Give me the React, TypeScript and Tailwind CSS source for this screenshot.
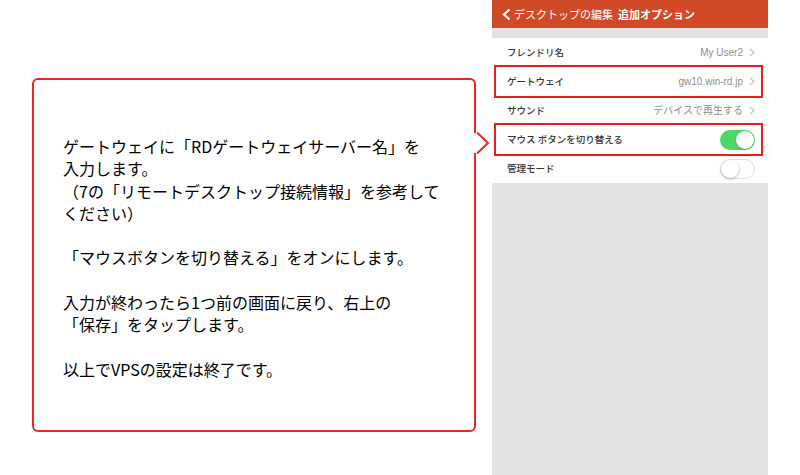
import React from 'react';

const jp = { fontFamily: '"Noto Sans CJK JP", "Noto Sans", sans-serif' };

type Row = {
  label: string;
  value?: string;
  toggle?: boolean;
  on?: boolean;
  boxed?: boolean;
};

const rows: Row[] = [
  { label: 'フレンドリ名', value: 'My User2' },
  { label: 'ゲートウェイ', value: 'gw10.win-rd.jp', boxed: true },
  { label: 'サウンド', value: 'デバイスで再生する' },
  { label: 'マウス ボタンを切り替える', toggle: true, on: true, boxed: true },
  { label: '管理モード', toggle: true, on: false },
];

function Chevron() {
  return (
    <svg width="6" height="9" viewBox="0 0 6 9" className="ml-[6px]">
      <polyline points="1,1 5,4.5 1,8" fill="none" stroke="#c4c4c4" strokeWidth="1.2" />
    </svg>
  );
}

function Toggle({ on }: { on: boolean }) {
  return on ? (
    <div className="w-[35px] h-[20px] rounded-full bg-[#4cd964] flex items-center justify-end pr-[1px]">
      <div className="w-[18px] h-[18px] rounded-full bg-white shadow-[0_1px_2px_rgba(0,0,0,0.25)]" />
    </div>
  ) : (
    <div className="w-[35px] h-[20px] rounded-full bg-white border border-[#e2e2e2] flex items-center">
      <div className="w-[18px] h-[18px] rounded-full bg-white shadow-[0_1px_3px_rgba(0,0,0,0.3)]" />
    </div>
  );
}

function SettingRow({ row }: { row: Row }) {
  return (
    <div className="relative h-[29px] bg-white flex items-center pl-[15px] pr-[13px]">
      <span className="text-[9.5px] font-medium text-[#333]" style={jp}>
        {row.label}
      </span>
      <div className="ml-auto flex items-center">
        {row.toggle ? (
          <Toggle on={!!row.on} />
        ) : (
          <>
            <span
              className="text-[10px] text-[#8e8e8e]"
              style={{ fontFamily: '"Liberation Sans", "Noto Sans CJK JP", sans-serif' }}
            >
              {row.value}
            </span>
            <Chevron />
          </>
        )}
      </div>
      {/* 赤枠 */}
      {row.boxed && (
        <div className="absolute z-10 top-[-2px] bottom-[-2px] left-[2px] right-[5px] border-2 border-[#e8201c]" />
      )}
    </div>
  );
}

export default function App() {
  return (
    <div className="w-[800px] h-[475px] flex bg-white overflow-hidden">
      {/* 説明吹き出し */}
      <div className="pl-[32px] pt-[78px]">
        <div className="relative w-[444px] h-[354px] border-2 border-[#e8262a] rounded-[6px] bg-white pl-[29px] pt-[55px]">
          <p className="text-[16px] leading-[22.3px] text-black whitespace-nowrap" style={jp}>
            ゲートウェイに「RDゲートウェイサーバー名」を
            <br />
            入力します。
            <br />
            （7の「リモートデスクトップ接続情報」を参考して
            <br />
            ください）
            <br />
            <br />
            「マウスボタンを切り替える」をオンにします。
            <br />
            <br />
            入力が終わったら1つ前の画面に戻り、右上の
            <br />
            「保存」をタップします。
            <br />
            <br />
            以上でVPSの設定は終了です。
          </p>
          <svg width="18" height="26" viewBox="0 0 18 26" className="absolute left-[440px] top-[51px]">
            <polygon points="0,2 3,2 14,12 3,22 0,22" fill="white" />
            <polyline points="3,1.5 14,12 3,22.5" fill="none" stroke="#e8262a" strokeWidth="2" />
          </svg>
        </div>
      </div>

      {/* アプリ画面 */}
      <div className="ml-[16px] w-[276px] h-full bg-[#e3e3e3] flex flex-col">
        <div className="h-[28px] bg-[#d14a28] flex items-center pl-[10px] text-white" style={jp}>
          <svg width="9" height="13" viewBox="0 0 9 13" className="mr-[3px]">
            <polyline points="7.5,1.5 2,6.5 7.5,11.5" fill="none" stroke="white" strokeWidth="2.2" />
          </svg>
          <span className="text-[11px]">デスクトップの編集</span>
          <span className="text-[11px] font-bold ml-[5px]">追加オプション</span>
        </div>
        <div className="h-[10px]" />
        {rows.map((r) => (
          <SettingRow key={r.label} row={r} />
        ))}
      </div>
    </div>
  );
}
